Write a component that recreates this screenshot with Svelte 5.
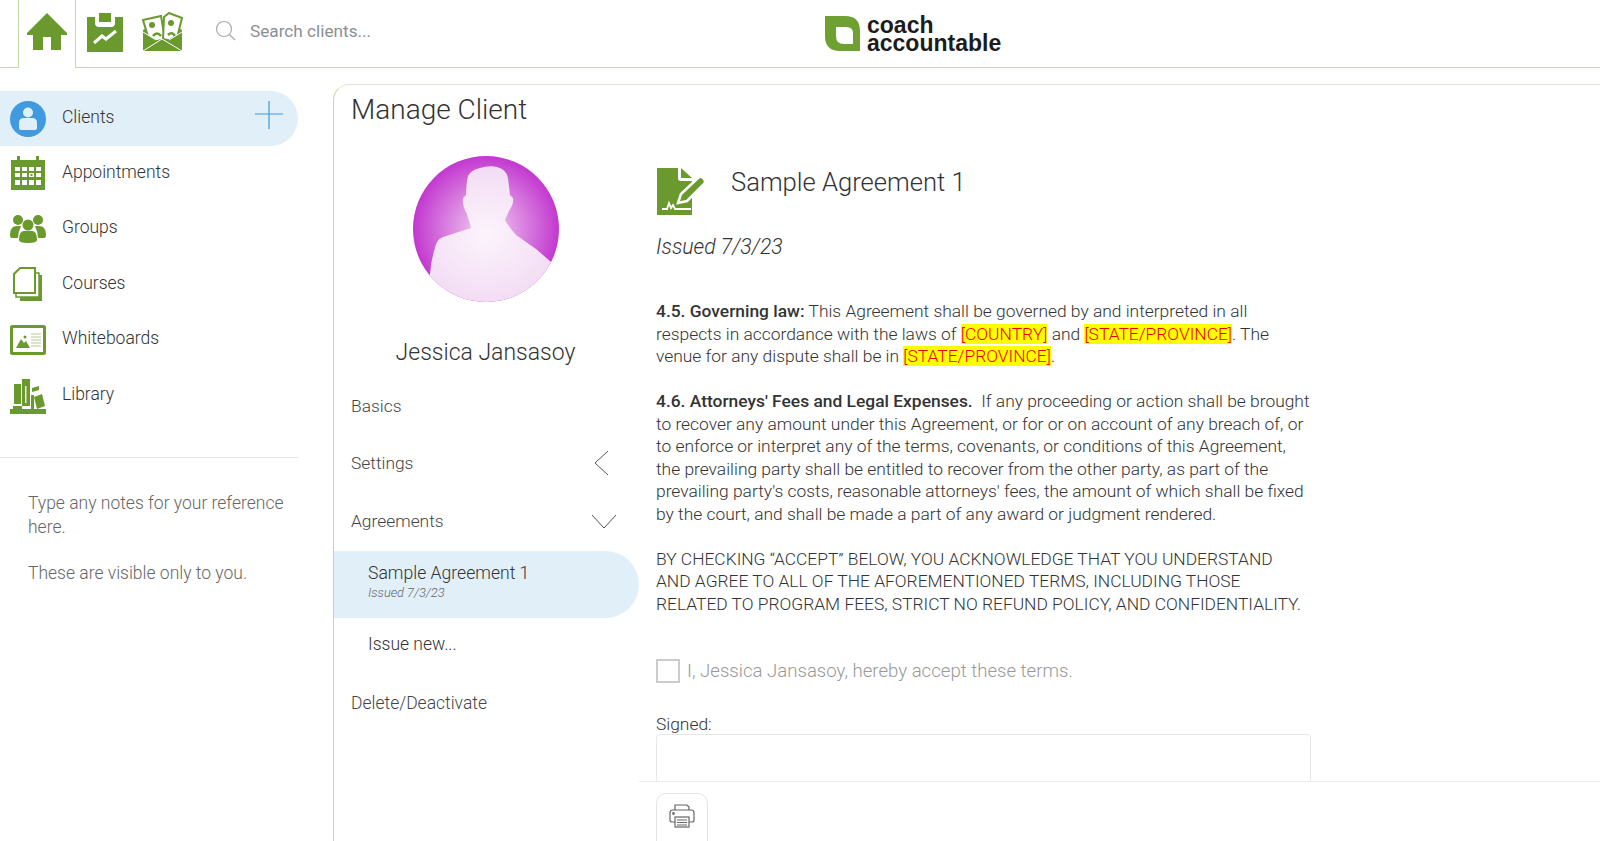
<script>
  const menu = ['Basics', 'Settings', 'Agreements']
</script>

<div class="page">
  <header class="topbar">
    <div class="stub"></div>
    <div class="tab">
      <svg width="42" height="38" viewBox="0 0 42 38"><path fill="#6a9a2e" d="M21 1 L41 21 L41 23 L35 23 L35 38 L25 38 L25 25 L17 25 L17 38 L7 38 L7 23 L1 23 L1 21 Z"/></svg>
    </div>
    <div class="topright">
      <div class="tools">
        <svg width="38" height="39" viewBox="0 0 38 39"><path fill="#6a9a2e" d="M1 4 H9 V10 Q9 14 13 14 H25 Q29 14 29 10 V4 H37 V39 H1 Z"/><rect x="13" y="0" width="12" height="9" fill="#6a9a2e"/><path fill="none" stroke="#fff" stroke-width="3" d="M8 30 L16 23 L20 26 L30 18"/></svg>
        <svg width="41" height="41" viewBox="0 0 41 41">
          <path fill="#6a9a2e" d="M1 18 L8 14 L33 14 L40 18 V39 H1 Z"/>
          <path fill="#fff" stroke="#6a9a2e" stroke-width="2" d="M1 8 L19 4 L23 27 L8 31 Z"/>
          <path fill="#fff" stroke="#6a9a2e" stroke-width="2" d="M22 5 L27 1 L40 6 L34 30 L21 27 Z"/>
          <circle cx="10" cy="13" r="3" fill="#6a9a2e"/><circle cx="29" cy="11" r="3" fill="#6a9a2e"/>
          <path fill="none" stroke="#6a9a2e" stroke-width="2.5" d="M11 24 Q15 19 19 24 M26 23 Q30 19 33 24"/>
          <path fill="#6a9a2e" d="M1 20 L20 31 L40 20 V39 H1 Z"/>
          <path fill="none" stroke="#fff" d="M1 39 L20 27 L40 39 M1 20 L14 28 M40 20 L27 28"/>
        </svg>
      </div>
      <div class="search">
        <svg width="22" height="22" viewBox="0 0 22 22" fill="none" stroke="#aaa" stroke-width="1.2"><circle cx="9" cy="9" r="7.5"/><path d="M14.5 14.5 L20 20"/></svg>
        <span>Search clients...</span>
      </div>
      <div class="logo">
        <svg width="35" height="35" viewBox="0 0 35 35"><path fill="#6fa032" fill-rule="evenodd" d="M0 0 H20 Q35 0 35 15 V35 H15 Q0 35 0 20 Z M11 12 V20 Q11 28 19 28 H28 V17 Q28 11 21 11 H11 Z"/></svg>
        <div class="wordmark">coach<br />accountable</div>
      </div>
    </div>
  </header>

  <div class="body">
    <aside class="sidebar">
      <nav class="nav">
        <div class="navrow active">
          <svg width="36" height="36" viewBox="0 0 36 36"><circle cx="18" cy="18" r="18" fill="#3f9ae0"/><circle cx="18" cy="11.5" r="5" fill="#e1eff9"/><path fill="#e1eff9" d="M9 27 V22 Q9 17 14 17 H22 Q27 17 27 22 V27 Q27 29 25 29 H11 Q9 29 9 27 Z"/></svg>
          <span>Clients</span>
          <svg class="plus" width="30" height="30" viewBox="0 0 30 30"><path stroke="#3f9ae0" stroke-width="1.2" d="M15 1 V29 M1 14 H29"/></svg>
        </div>
        <div class="navrow">
          <svg width="36" height="36" viewBox="0 0 36 36"><path fill="#6a9a2e" d="M1 4 H7 V0 H10 V4 H26 V0 H29 V4 H35 V34 H1 Z"/><g fill="#fff"><rect x="5" y="11" width="5" height="4"/><rect x="12" y="11" width="5" height="4"/><rect x="19" y="11" width="5" height="4"/><rect x="26" y="11" width="5" height="4"/><rect x="5" y="17" width="5" height="4"/><rect x="12" y="17" width="5" height="4"/><rect x="19" y="17" width="5" height="4"/><rect x="26" y="17" width="5" height="4"/><rect x="5" y="24" width="5" height="5"/><rect x="12" y="24" width="5" height="5"/><rect x="19" y="24" width="5" height="5"/><rect x="26" y="24" width="5" height="5"/></g><rect x="20.5" y="18" width="2" height="2" fill="#6a9a2e"/></svg>
          <span>Appointments</span>
        </div>
        <div class="navrow">
          <svg width="36" height="30" viewBox="0 0 36 30"><g fill="#6a9a2e"><circle cx="8" cy="6" r="5"/><circle cx="28" cy="6" r="5"/><circle cx="18" cy="11" r="5.5"/><path d="M0 21 Q0 12 7 12 H11 Q8 18 8 24 H2 Q0 24 0 21 Z"/><path d="M36 21 Q36 12 29 12 H25 Q28 18 28 24 H34 Q36 24 36 21 Z"/><path d="M9 26 Q9 17 14 17 H22 Q27 17 27 26 Q27 29 18 29 Q9 29 9 26 Z"/></g></svg>
          <span>Groups</span>
        </div>
        <div class="navrow">
          <svg width="36" height="36" viewBox="0 0 36 36"><path fill="#6a9a2e" d="M27 8 H32 V34 H10 V29 H27 Z"/><path fill="#fff" stroke="#6a9a2e" stroke-width="1.5" d="M6 26 V30 H29 V6 H25"/><path fill="#fff" stroke="#6a9a2e" stroke-width="2" d="M10 1 H25 V26 H4 V7 Z"/></svg>
          <span>Courses</span>
        </div>
        <div class="navrow">
          <svg width="36" height="31" viewBox="0 0 36 31"><rect x="1.5" y="1.5" width="33" height="27" rx="1" fill="#fff" stroke="#6a9a2e" stroke-width="3"/><path fill="#6a9a2e" d="M6 23 L11 14 L14 18 L16 16 L20 23 Z"/><circle cx="15" cy="12" r="1.5" fill="#6a9a2e"/><path stroke="#b5ca94" d="M21 9 H31 M21 12 H31 M21 15 H31 M21 18 H31 M21 21 H31"/></svg>
          <span>Whiteboards</span>
        </div>
        <div class="navrow">
          <svg width="36" height="36" viewBox="0 0 36 36"><g fill="#6a9a2e"><rect x="4" y="6" width="7" height="20"/><rect x="12" y="1" width="8" height="27"/><path d="M22 10 L29 8 L29 12 L22 14 Z"/><path d="M24 19 L32 16 L35 28 L27 31 Z"/><path d="M0 36 V31 H36 V36 Z"/><rect x="3" y="28" width="9" height="3"/><rect x="21" y="17" width="3" height="14"/></g><rect x="15" y="8" width="1.5" height="17" fill="#e8efdc"/></svg>
          <span>Library</span>
        </div>
      </nav>
      <div class="notes">
        <p>Type any notes for your reference here.</p>
        <p>These are visible only to you.</p>
      </div>
    </aside>

    <main class="panel">
      <div class="leftcol">
        <h1>Manage Client</h1>
        <div class="avatar">
          <svg width="146" height="146" viewBox="0 0 146 146">
            <defs>
              <radialGradient id="bg" cx="50%" cy="50%" r="50%"><stop offset="0" stop-color="#f3d3f3"/><stop offset="1" stop-color="#c238cf"/></radialGradient>
              <radialGradient id="fg" cx="50%" cy="50%" r="60%"><stop offset="0" stop-color="#fcf4fc"/><stop offset="1" stop-color="#f1d8f3"/></radialGradient>
              <clipPath id="round"><circle cx="73" cy="73" r="73"/></clipPath>
            </defs>
            <circle cx="73" cy="73" r="73" fill="url(#bg)"/>
            <path clip-path="url(#round)" fill="url(#fg)" d="M55 20 Q58 14 67 12 Q76 9 84 11 Q94 14 95 22 L97 39 L100 42 Q101 48 96 55 L92 64 Q96 71 103 79 L123 93 L138 106 L146 146 L0 146 L17 118 Q18 104 22 92 Q23 84 30 81 L58 72 L54 58 Q49 50 50 42 L53 39 Q53 28 55 20 Z"/>
          </svg>
        </div>
        <div class="name">Jessica Jansasoy</div>
        <ul class="menu">
          {#each menu as item}
            <li>
              <span>{item}</span>
              {#if item == 'Settings'}
                <svg class="left" width="16" height="26" viewBox="0 0 16 26" fill="none" stroke="#555"><path d="M15 1 L2 13 L15 25"/></svg>
              {:else if item == 'Agreements'}
                <svg width="26" height="16" viewBox="0 0 26 16" fill="none" stroke="#555"><path d="M1 2 L13 15 L25 2"/></svg>
              {/if}
            </li>
          {/each}
        </ul>
        <div class="sub active">
          <div>Sample Agreement 1</div>
          <small>Issued 7/3/23</small>
        </div>
        <div class="sub issue">Issue new...</div>
        <div class="delete">Delete/Deactivate</div>
      </div>

      <div class="rightcol">
        <div class="doc">
          <div class="dochead">
            <svg width="50" height="50" viewBox="0 0 50 50">
              <path fill="#6a9a2e" d="M1 2 H22 V12 Q22 15 25 15 H36 V49 H1 Z"/>
              <path fill="#6a9a2e" d="M25 2 L36 12 H25 Z"/>
              <path fill="#6a9a2e" stroke="#fff" stroke-width="2.5" d="M22 37 L25 28 L42 12 Q45 9 48 13 Q50 16 48 18 L31 35 Z"/>
              <path fill="none" stroke="#fff" stroke-width="1.8" d="M6 43 H11 L13 37 L15 42 L17 39 L19 43 H35"/>
            </svg>
            <h2>Sample Agreement 1</h2>
          </div>
          <div class="issued">Issued 7/3/23</div>
          <p><b>4.5. Governing law:</b> This Agreement shall be governed by and interpreted in all respects in accordance with the laws of <mark>[COUNTRY]</mark> and <mark>[STATE/PROVINCE]</mark>. The venue for any dispute shall be in <mark>[STATE/PROVINCE]</mark>.</p>
          <p><b>4.6. Attorneys' Fees and Legal Expenses.</b>&nbsp; If any proceeding or action shall be brought to recover any amount under this Agreement, or for or on account of any breach of, or to enforce or interpret any of the terms, covenants, or conditions of this Agreement, the prevailing party shall be entitled to recover from the other party, as part of the prevailing party's costs, reasonable attorneys' fees, the amount of which shall be fixed by the court, and shall be made a part of any award or judgment rendered.</p>
          <p>BY CHECKING “ACCEPT” BELOW, YOU ACKNOWLEDGE THAT YOU UNDERSTAND AND AGREE TO ALL OF THE AFOREMENTIONED TERMS, INCLUDING THOSE RELATED TO PROGRAM FEES, STRICT NO REFUND POLICY, AND CONFIDENTIALITY.</p>
          <label class="accept"><span class="box"></span>I, Jessica Jansasoy, hereby accept these terms.</label>
          <div class="signed">Signed:</div>
          <div class="signbox"></div>
        </div>
        <footer class="actions">
          <button aria-label="Print">
            <svg width="26" height="24" viewBox="0 0 26 24" fill="none" stroke="#666" stroke-width="1.2"><path d="M6 6 V1 H18 L20 3 V6"/><path d="M6 18 H3 Q1 18 1 16 V9 Q1 6 4 6 H22 Q25 6 25 9 V16 Q25 18 23 18 H20"/><rect x="6" y="13" width="14" height="10"/><path d="M8 16 H18 M8 18.5 H18 M8 21 H18"/><circle cx="4.5" cy="9.5" r="0.8"/></svg>
          </button>
        </footer>
      </div>
    </main>
  </div>
</div>

<style>
  :global(body) {
    margin: 0;
    background: #fff;
    overflow: hidden;
  }
  .page {
    width: 1600px;
    height: 841px;
    display: flex;
    flex-direction: column;
    font-family: Roboto, "Liberation Sans", sans-serif;
    font-weight: 300;
    color: #333;
    overflow: hidden;
  }

  /* top bar */
  .topbar {
    height: 68px;
    display: flex;
    flex-shrink: 0;
  }
  .stub {
    width: 18px;
    border-bottom: 1px solid #c3d9a6;
  }
  .tab {
    width: 56px;
    border-left: 1px solid #c3d9a6;
    border-right: 1px solid #c3d9a6;
    display: flex;
    justify-content: center;
    padding-top: 12px;
  }
  .topright {
    flex: 1;
    display: flex;
    align-items: center;
    border-bottom: 1px solid #c3d9a6;
  }
  .tools {
    display: flex;
    align-items: center;
    gap: 18px;
    padding-left: 10px;
    margin-top: -3px;
  }
  .search {
    display: flex;
    align-items: center;
    gap: 13px;
    margin-left: 32px;
    width: 610px;
    font-size: 17.2px;
    color: #8a8f96;
    font-weight: 400;
    margin-top: -5px;
  }
  .logo {
    display: flex;
    align-items: center;
    gap: 7px;
  }
  .wordmark {
    font-family: "Liberation Sans", sans-serif;
    font-weight: 700;
    font-size: 23px;
    line-height: 18px;
    color: #1c1c1c;
  }

  /* sidebar */
  .body {
    flex: 1;
    display: flex;
    min-height: 0;
    padding-top: 16px;
  }
  .sidebar {
    width: 298px;
    margin-right: 35px;
    flex-shrink: 0;
  }
  .nav {
    padding: 7px 0 34px;
    border-bottom: 1px solid #e4e4e4;
  }
  .navrow {
    height: 55.4px;
    display: flex;
    align-items: center;
    gap: 16px;
    padding-left: 10px;
    font-size: 17.5px;
    font-weight: 300;
    color: #333;
  }
  .navrow span {
    margin-bottom: 4px;
  }
  .navrow svg {
    width: 36px;
    flex-shrink: 0;
  }
  .navrow.active {
    background: #e1eff9;
    border-radius: 0 28px 28px 0;
  }
  .navrow .plus {
    width: 30px;
    margin-left: auto;
    margin-right: 14px;
    margin-bottom: 7px;
  }
  .notes {
    padding: 34px 0 0 28px;
    font-size: 17.5px;
    line-height: 23.5px;
    color: #666;
    font-weight: 300;
  }
  .notes p {
    margin: 0 0 23px;
    width: 262px;
  }

  /* main panel */
  .panel {
    flex: 1;
    display: flex;
    border-left: 1px solid #c3d9a6;
    border-top: 1px solid #dbe8c9;
    border-top-left-radius: 16px;
    min-width: 0;
  }
  .leftcol {
    width: 305px;
    flex-shrink: 0;
  }
  h1 {
    margin: 0;
    padding: 9px 0 0 17px;
    font-size: 28px;
    line-height: 32px;
    font-weight: 300;
    color: #333;
  }
  .avatar {
    margin-top: 30px;
    padding-right: 2px;
    display: flex;
    justify-content: center;
    height: 146px;
  }
  .name {
    margin-top: 38px;
    text-align: center;
    font-size: 23px;
    line-height: 26px;
    font-weight: 300;
    padding-right: 2px;
  }
  .menu {
    list-style: none;
    margin: 11px 0 0;
    padding: 0;
  }
  .menu li {
    height: 57.5px;
    display: flex;
    align-items: center;
    justify-content: space-between;
    padding: 0 22px 0 17px;
    font-size: 17.4px;
    font-weight: 300;
    color: #444;
  }
  .menu li .left {
    margin-right: 8px;
  }
  .sub {
    padding-left: 34px;
    font-size: 17.6px;
    font-weight: 300;
    color: #333;
  }
  .sub.active {
    height: 67px;
    margin-top: 1px;
    background: #e1eff9;
    border-radius: 0 34px 34px 0;
    box-sizing: border-box;
    padding-top: 11px;
    line-height: 22px;
  }
  .sub small {
    display: block;
    font-size: 12.8px;
    line-height: 18px;
    font-style: italic;
    color: #666;
  }
  .issue {
    margin-top: 15px;
    line-height: 22px;
    font-size: 17.5px;
  }
  .delete {
    margin-top: 37px;
    padding-left: 17px;
    font-size: 17.5px;
    line-height: 22px;
    font-weight: 300;
    color: #444;
  }

  .rightcol {
    flex: 1;
    display: flex;
    flex-direction: column;
    min-width: 0;
  }
  .doc {
    flex: 1;
    min-height: 0;
    overflow: hidden;
    padding: 81px 0 0 17px;
    width: 655px;
    font-size: 17.4px;
    line-height: 22.5px;
    color: #333;
  }
  .dochead {
    display: flex;
    align-items: flex-start;
    gap: 25px;
    height: 50px;
  }
  .dochead h2 {
    padding-top: 1px;
  }
  h2 {
    margin: 0;
    font-size: 25.6px;
    line-height: 30px;
    font-weight: 300;
    color: #333;
  }
  .issued {
    margin-top: 19px;
    font-size: 21.2px;
    line-height: 24px;
    font-style: italic;
    margin-bottom: 41px;
  }
  .doc p {
    margin: 0 0 22.5px;
  }
  .doc b {
    font-weight: 500;
  }
  mark {
    background: #ff0;
    color: #e00;
  }
  .accept {
    margin-top: 44px;
    display: flex;
    align-items: center;
    gap: 7px;
    color: #999;
    font-size: 18.6px;
    font-weight: 300;
  }
  .box {
    width: 20px;
    height: 20px;
    border: 2px solid #ccc;
    flex-shrink: 0;
  }
  .signed {
    margin-top: 30px;
    line-height: 22px;
    font-weight: 300;
  }
  .signbox {
    margin-top: -1px;
    height: 60px;
    border: 1.5px solid #e6e6e6;
    border-radius: 4px;
  }
  .actions {
    height: 60px;
    flex-shrink: 0;
    border-top: 1.5px solid #ececec;
    padding: 11px 0 0 17px;
    box-sizing: border-box;
    overflow: hidden;
  }
  button {
    width: 52px;
    height: 60px;
    background: #fff;
    border: 1.5px solid #e4e4e4;
    border-radius: 10px;
    padding: 0 0 14px;
    display: flex;
    align-items: center;
    justify-content: center;
  }
</style>
